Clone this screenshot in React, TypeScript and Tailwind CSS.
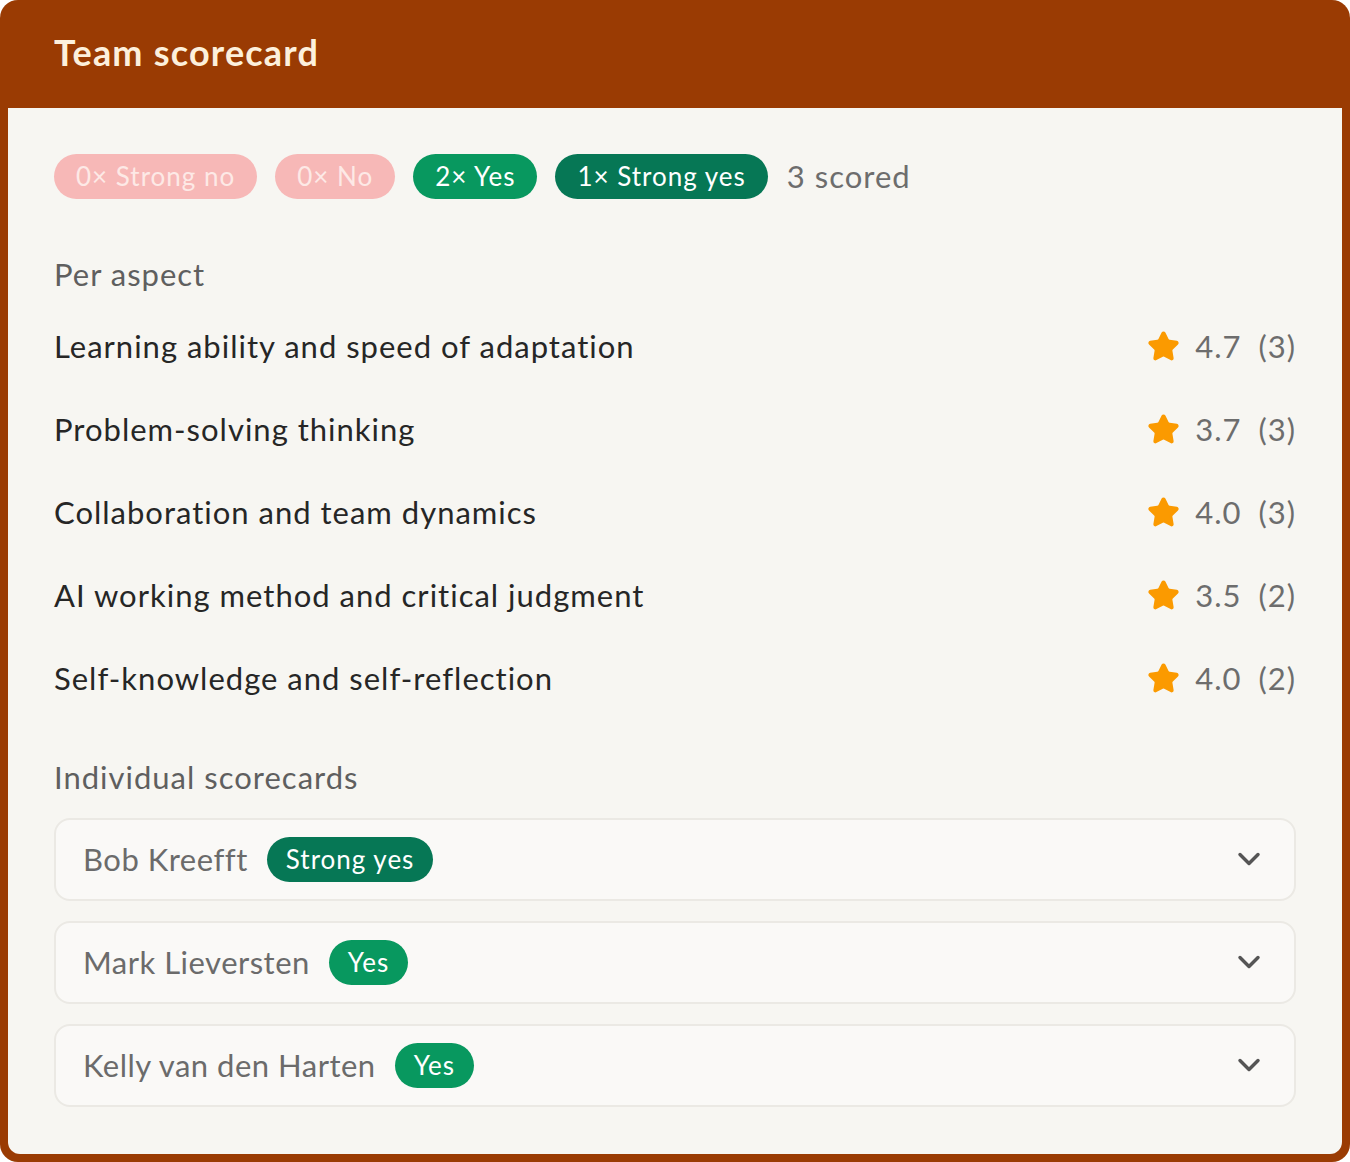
import { ChevronDown, Star } from "lucide-react";

const tally = [
  { label: "0× Strong no", cls: "bg-[#f7b8b7] text-[#fde9e6]" },
  { label: "0× No", cls: "bg-[#f7b8b7] text-[#fde9e6]" },
  { label: "2× Yes", cls: "bg-[#08985f] text-white" },
  { label: "1× Strong yes", cls: "bg-[#067755] text-white" },
];

const aspects = [
  { name: "Learning ability and speed of adaptation", avg: "4.7", n: 3 },
  { name: "Problem-solving thinking", avg: "3.7", n: 3 },
  { name: "Collaboration and team dynamics", avg: "4.0", n: 3 },
  { name: "AI working method and critical judgment", avg: "3.5", n: 2 },
  { name: "Self-knowledge and self-reflection", avg: "4.0", n: 2 },
];

const people = [
  { name: "Bob Kreefft", verdict: "Strong yes", cls: "bg-[#067755]" },
  { name: "Mark Lieversten", verdict: "Yes", cls: "bg-[#08985f]" },
  { name: "Kelly van den Harten", verdict: "Yes", cls: "bg-[#08985f]" },
];

export default function App() {
  return (
    <div className="w-[1350px] h-[1162px] bg-[#9a3b03] rounded-[18px] px-2 pb-2 flex flex-col font-['Lato',sans-serif]">
      <div className="h-[108px] flex items-center px-[46px] pb-1 shrink-0">
        <h1 className="text-[36px] font-bold text-[#fdf0dc] tracking-[1.2px]">Team scorecard</h1>
      </div>
      <div className="flex-1 bg-[#f7f6f2] rounded-b-[12px] px-[46px] pt-[45px] tracking-[1px]">
        <div className="flex items-center gap-[18px]">
          {tally.map((t) => (
            <span key={t.label} className={`h-[45px] flex items-center px-[22px] rounded-full text-[26px] ${t.cls}`}>
              {t.label}
            </span>
          ))}
          <span className="text-[31px] text-[#6d6d6d] ml-px">3 scored</span>
        </div>

        <div className="mt-[55px] h-[40px] flex items-center text-[31px] text-[#5f5f5f]">Per aspect</div>
        <div className="mt-[10px]">
          {aspects.map((a) => (
            <div key={a.name} className="h-[83px] flex items-center justify-between">
              <span className="text-[31px] text-[#262626]">{a.name}</span>
              <span className="flex items-center text-[31px] text-[#6d6d6d]">
                <Star size={33} className="text-[#fb9a00] fill-[#fb9a00] mr-[15px]" strokeWidth={2} />
                <span>{a.avg}</span>
                <span className="ml-[17px]">({a.n})</span>
              </span>
            </div>
          ))}
        </div>

        <div className="mt-[38px] h-[40px] flex items-center text-[31px] text-[#5f5f5f]">Individual scorecards</div>
        <div className="mt-[20px] flex flex-col gap-[20px]">
          {people.map((p) => (
            <div
              key={p.name}
              className="h-[83px] flex items-center justify-between rounded-[16px] border-2 border-[#ebe9e4] bg-[#faf9f7] pl-[27px] pr-[27px]"
            >
              <div className="flex items-center gap-[19px]">
                <span className="text-[31px] text-[#6b6b6b] tracking-[0.5px]">{p.name}</span>
                <span className={`h-[45px] flex items-center px-[19px] rounded-full text-[26px] text-white ${p.cls}`}>
                  {p.verdict}
                </span>
              </div>
              <ChevronDown size={36} strokeWidth={2.3} className="text-[#555555]" />
            </div>
          ))}
        </div>
      </div>
    </div>
  );
}
